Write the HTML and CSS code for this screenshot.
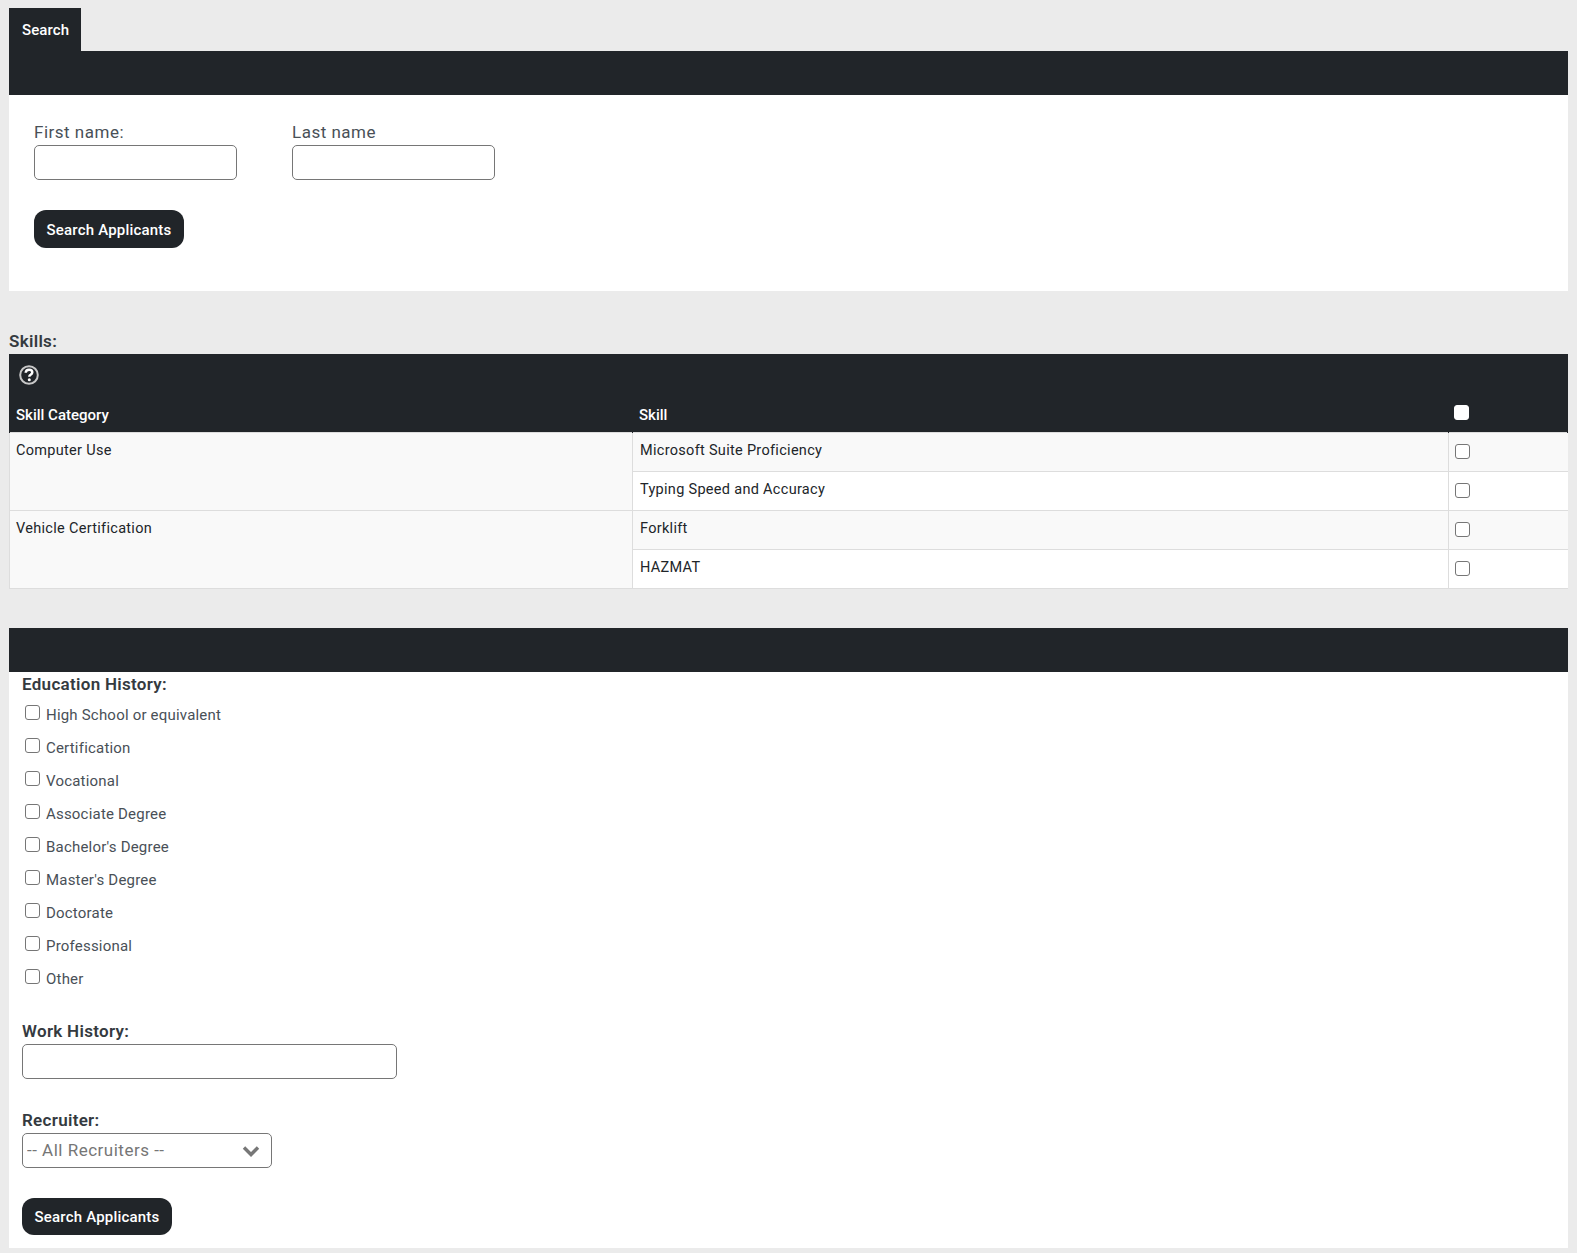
FILE: index.html

```html
<!DOCTYPE html>
<html lang="en">
<head>
    <meta charset="UTF-8">
    <meta name="viewport" content="width=device-width, initial-scale=1.0">
    <title>Search Applicants</title>
    <link rel="stylesheet" href="styles.css">
</head>
<body>
    <div class="tabs">
        <div class="tab">Search</div>
    </div>

    <div class="bar"></div>
    <form class="panel search-panel">
        <div class="name-fields">
            <div class="field">
                <label class="field-label">First name:</label>
                <input class="input input-name" type="text">
            </div>
            <div class="field">
                <label class="field-label">Last name</label>
                <input class="input input-name" type="text">
            </div>
        </div>
        <button class="button" type="button">Search Applicants</button>
    </form>

    <div class="section-title skills-title">Skills:</div>
    <div class="table-head">
        <svg class="help-icon" viewBox="0 0 20 20" width="20" height="20">
            <circle cx="10" cy="10" r="8.8" fill="none" stroke="#c8c8c8" stroke-width="2"/>
            <path d="M6.700 7.800c.1-2 1.500-3.100 3.400-3.100 1.900 0 3.200 1.100 3.200 2.600 0 1.300-.8 1.900-1.700 2.500-.8.500-1.300 1-1.300 1.900" fill="none" stroke="#fff" stroke-width="2.500"/>
            <circle cx="10.300" cy="14.800" r="1.500" fill="#fff"/>
        </svg>
    </div>
    <table class="skills">
        <thead>
            <tr>
                <th class="col-category">Skill Category</th>
                <th class="col-skill">Skill</th>
                <th class="col-check"><input class="check check-all" type="checkbox"></th>
            </tr>
        </thead>
        <tbody>
            <tr>
                <td class="cell-category" rowspan="2">Computer Use</td>
                <td>Microsoft Suite Proficiency</td>
                <td class="cell-check"><input class="check" type="checkbox"></td>
            </tr>
            <tr>
                <td>Typing Speed and Accuracy</td>
                <td class="cell-check"><input class="check" type="checkbox"></td>
            </tr>
            <tr>
                <td class="cell-category" rowspan="2">Vehicle Certification</td>
                <td>Forklift</td>
                <td class="cell-check"><input class="check" type="checkbox"></td>
            </tr>
            <tr>
                <td>HAZMAT</td>
                <td class="cell-check"><input class="check" type="checkbox"></td>
            </tr>
        </tbody>
    </table>

    <div class="bar bar-spaced"></div>
    <form class="panel filter-panel">
        <div class="section-title">Education History:</div>
        <div class="check-list">
            <label class="check-row"><input class="check" type="checkbox"><span>High School or equivalent</span></label>
            <label class="check-row"><input class="check" type="checkbox"><span>Certification</span></label>
            <label class="check-row"><input class="check" type="checkbox"><span>Vocational</span></label>
            <label class="check-row"><input class="check" type="checkbox"><span>Associate Degree</span></label>
            <label class="check-row"><input class="check" type="checkbox"><span>Bachelor's Degree</span></label>
            <label class="check-row"><input class="check" type="checkbox"><span>Master's Degree</span></label>
            <label class="check-row"><input class="check" type="checkbox"><span>Doctorate</span></label>
            <label class="check-row"><input class="check" type="checkbox"><span>Professional</span></label>
            <label class="check-row"><input class="check" type="checkbox"><span>Other</span></label>
        </div>

        <div class="section-title work-title">Work History:</div>
        <input class="input input-work" type="text">

        <div class="section-title recruiter-title">Recruiter:</div>
        <div class="select-wrap">
            <select class="select">
                <option>-- All Recruiters --</option>
            </select>
            <svg class="select-arrow" viewBox="0 0 18 12" width="18" height="12">
                <path d="M2 2.500l7 7 7-7" fill="none" stroke="#777" stroke-width="3.400"/>
            </svg>
        </div>

        <button class="button button-bottom" type="button">Search Applicants</button>
    </form>
</body>
</html>
```

FILE: styles.css

```css
:root {
    --dark: #212529;
    --page: #ebebeb;
    --line: #dddddd;
    --stripe: #f9f9f9;
    --text: #343a40;
    --soft-text: #495057;
}

* {
    box-sizing: border-box;
}

body {
    background-color: var(--page);
    color: var(--text);
    font-family: "Roboto", "Liberation Sans", sans-serif;
    margin: 0;
    padding: 8px 9px 5px;
}

.tabs {
    display: flex;
    height: 43px;
}

.tab {
    background-color: var(--dark);
    color: #fff;
    font-size: 15px;
    font-weight: 500;
    letter-spacing: 0.1px;
    padding: 13px 13px 0;
    width: 72px;
}

.bar {
    background-color: var(--dark);
    height: 44px;
}

.bar-spaced {
    margin-top: 39px;
}

.panel {
    background-color: #fff;
}

.search-panel {
    height: 196px;
    padding: 27px 25px 0;
}

.name-fields {
    display: flex;
    gap: 55px;
    margin-bottom: 30px;
}

.field-label {
    color: var(--soft-text);
    display: block;
    font-size: 17px;
    height: 23px;
    letter-spacing: 0.5px;
    line-height: 20px;
}

.input {
    background-color: #fff;
    border: 1px solid #767676;
    border-radius: 5px;
    display: block;
    height: 35px;
}

.input-name {
    width: 203px;
}

.input-work {
    width: 375px;
}

.button {
    background-color: var(--dark);
    border: none;
    border-radius: 12px;
    color: #fff;
    display: block;
    font-family: inherit;
    font-size: 15px;
    font-weight: 500;
    height: 38px;
    letter-spacing: 0.2px;
    padding: 2px 0 0;
    width: 150px;
}

.section-title {
    font-size: 17px;
    font-weight: 600;
    letter-spacing: 0.3px;
    line-height: 20px;
}

.skills-title {
    height: 23px;
    margin-top: 40px;
}

.table-head {
    background-color: var(--dark);
    height: 44px;
    padding: 11px 0 0 10px;
}

.help-icon {
    display: block;
}

.skills {
    border-collapse: collapse;
    color: var(--dark);
    font-size: 14.5px;
    table-layout: fixed;
    width: 100%;
}

.skills th {
    background-color: var(--dark);
    border-color: var(--dark);
    border-style: solid;
    border-width: 0 1px;
    color: #fff;
    font-size: 15px;
    font-weight: 500;
    height: 34px;
    padding: 0 0 0 6px;
    text-align: left;
    vertical-align: middle;
}

.col-category {
    width: 623px;
}

.skills .col-check {
    padding-left: 5px;
    width: 119px;
}

.skills td {
    border: 1px solid var(--line);
    height: 39px;
    letter-spacing: 0.3px;
    padding: 9px 7px;
    vertical-align: top;
}

.skills td.cell-category {
    padding-left: 6px;
}

.skills tbody tr:nth-child(odd) {
    background-color: var(--stripe);
}

.skills tbody tr:nth-child(even) {
    background-color: #fff;
}

.skills td.cell-check {
    border-right: none;
    padding: 11px 6px 0;
}

.check {
    appearance: none;
    background-color: #fff;
    border: 1px solid #767676;
    border-radius: 3px;
    display: block;
    height: 15px;
    margin: 0;
    width: 15px;
}

.check-all {
    border-color: #fff;
}

.col-check .check-all {
    margin: -5px 0 0;
}

.filter-panel {
    height: 576px;
    padding: 2px 13px 0;
}

.check-list {
    margin-top: 11px;
    padding-left: 3px;
}

.check-row {
    align-items: flex-start;
    color: var(--soft-text);
    display: flex;
    font-size: 15px;
    gap: 6px;
    height: 33px;
    letter-spacing: 0.2px;
}

.check-row span {
    padding-top: 1px;
}

.work-title {
    height: 23px;
    margin-top: 19px;
}

.recruiter-title {
    height: 23px;
    margin-top: 31px;
}

.select-wrap {
    position: relative;
    width: 250px;
}

.select {
    appearance: none;
    background-color: #fff;
    border: 1px solid #767676;
    border-radius: 5px;
    color: #767676;
    display: block;
    font-family: inherit;
    font-size: 17px;
    height: 35px;
    letter-spacing: 0.5px;
    padding: 0 0 0 4px;
    width: 100%;
}

.select-arrow {
    position: absolute;
    right: 12px;
    top: 12px;
}

.button-bottom {
    height: 37px;
    margin-top: 30px;
}
```
